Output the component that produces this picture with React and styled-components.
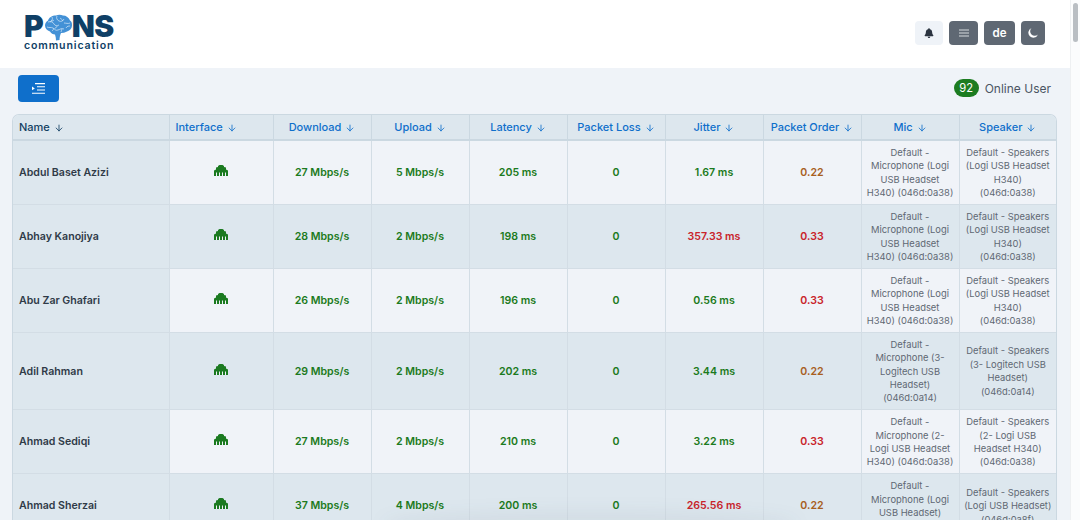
import React from "react";
import styled, { createGlobalStyle } from "styled-components";
import { ArrowDown } from "lucide-react";
import { FaBell } from "react-icons/fa";

const GlobalStyle = createGlobalStyle`
  html, body {
    margin: 0;
    padding: 0;
    height: 100%;
    overflow: hidden;
  }
  body {
    background: #fff;
    font-family: Inter, "Liberation Sans", sans-serif;
  }
`;

const COLUMNS = [156, 104, 98, 98, 98, 98, 98, 98, 98, 97];

const Page = styled.div`
  display: flex;
  height: 520px;
  overflow: hidden;
`;

const Content = styled.div`
  flex: 1;
  min-width: 0;
  display: flex;
  flex-direction: column;
`;

const ScrollTrack = styled.div`
  width: 10px;
  flex: none;
  padding: 3px 2px 0 2px;
  box-sizing: border-box;
  background: #fbfcfd;
  border-left: 1px solid #eef0f2;
`;

const ScrollThumb = styled.div`
  height: 39px;
  border-radius: 3px;
  background: #b9bec3;
`;

const TopBar = styled.header`
  height: 68px;
  flex: none;
  display: flex;
  align-items: center;
  justify-content: space-between;
  padding: 0 25px 0 24px;
  box-sizing: border-box;
  background: #fff;
`;

const Logo = styled.div`
  color: #0f3f66;
  width: 92px;
  margin-top: -2px;
`;

const LogoMark = styled.div`
  display: flex;
  align-items: center;
  height: 24px;
  font-size: 30px;
  font-weight: 900;
  line-height: 24px;
`;

const LogoTail = styled.span`
  letter-spacing: -0.4px;
`;

const LogoSub = styled.div`
  font-size: 10.6px;
  font-weight: 600;
  line-height: 12px;
  letter-spacing: 0.85px;
  margin-top: 2px;
  white-space: nowrap;
`;

const Actions = styled.div`
  display: flex;
  gap: 6px;
  margin-top: -2px;
`;

const IconButton = styled.button`
  height: 24px;
  width: ${(p) => p.$width}px;
  padding: 0;
  border: 0;
  border-radius: 4px;
  display: flex;
  align-items: center;
  justify-content: center;
  background: ${(p) => (p.$light ? "#eff3f8" : "#5f6873")};
  color: ${(p) => (p.$light ? "#2b3440" : "#fff")};
  font-family: inherit;
  font-size: 11.5px;
  font-weight: 600;
`;

const Body = styled.main`
  flex: 1;
  min-height: 0;
  background: #eff3f8;
  padding: 0 0 0 12px;
  display: flex;
  flex-direction: column;
  overflow: hidden;
`;

const SubBar = styled.div`
  height: 46px;
  flex: none;
  display: flex;
  align-items: center;
  justify-content: space-between;
  padding: 0 19px 6px 6px;
  box-sizing: border-box;
`;

const ToggleButton = styled.button`
  width: 41px;
  height: 27px;
  padding: 0;
  border: 0;
  border-radius: 4px;
  background: #0f6fcb;
  display: flex;
  align-items: center;
  justify-content: center;
`;

const OnlineCount = styled.div`
  display: flex;
  align-items: center;
  gap: 6px;
  font-size: 12px;
  color: #4b5563;
`;

const Badge = styled.span`
  width: 25px;
  height: 18px;
  border-radius: 9px;
  background: #1c7c21;
  color: #fff;
  font-size: 11.2px;
  display: flex;
  align-items: center;
  justify-content: center;
`;

const TableWrap = styled.div`
  width: 1045px;
  flex: none;
  border: 1px solid #cbd8e1;
  border-bottom: 0;
  border-radius: 7px 7px 0 0;
  box-sizing: border-box;
  overflow: hidden;
`;

const Table = styled.table`
  width: 100%;
  table-layout: fixed;
  border-collapse: collapse;
  font-size: 10.6px;
`;

const Head = styled.th`
  height: 25px;
  padding: 0 6px;
  background: #dde7ee;
  border-left: 1px solid #cbd8e1;
  border-bottom: 2px solid #cbd8e1;
  box-sizing: border-box;
  font-weight: 500;
  font-size: 11px;
  white-space: nowrap;
  text-align: ${(p) => (p.$left ? "left" : "center")};
  color: ${(p) => (p.$dark ? "#123f63" : "#0f6fcb")};
  &:first-child {
    border-left: 0;
  }
  svg {
    margin-left: 4px;
    vertical-align: -1.5px;
  }
`;

const Row = styled.tr`
  background: ${(p) => (p.$even ? "#dde7ee" : "#f0f3f8")};
`;

const NameCell = styled.td`
  background: #dde7ee;
  padding: 4.7px 6px;
  font-weight: 600;
  color: #2f3a47;
  border-bottom: 1px solid #d3dde5;
`;

const Cell = styled.td`
  padding: 4.7px 6px;
  text-align: center;
  font-weight: 600;
  color: ${(p) => p.$tone || "#1b7a20"};
  border-left: 1px solid #d3dde5;
  border-bottom: 1px solid #d3dde5;
`;

const DeviceCell = styled.td`
  padding: 4.7px ${(p) => p.$inset}px;
  text-align: center;
  font-size: 9.4px;
  line-height: 13.4px;
  color: #5f6873;
  border-left: 1px solid #d3dde5;
  border-bottom: 1px solid #d3dde5;
`;

const EthernetGlyph = styled.svg`
  display: block;
  margin: -4px auto 0;
`;

const FadeShadow = styled.div`
  position: absolute;
  left: 380px;
  bottom: -16px;
  width: 420px;
  height: 26px;
  border-radius: 50%;
  background: rgba(40, 60, 80, 0.05);
  filter: blur(8px);
  pointer-events: none;
`;

const GREEN = "#1b7a20";
const RED = "#c9242b";
const AMBER = "#a85f1f";

const HEADERS = [
  "Name",
  "Interface",
  "Download",
  "Upload",
  "Latency",
  "Packet Loss",
  "Jitter",
  "Packet Order",
  "Mic",
  "Speaker",
];

const ROWS = [
  {
    name: "Abdul Baset Azizi",
    down: "27 Mbps/s",
    up: "5 Mbps/s",
    latency: "205 ms",
    jitter: "1.67 ms",
    order: "0.22",
    mic: "Default - Microphone (Logi USB Headset H340) (046d:0a38)",
    speaker: "Default - Speakers (Logi USB Headset H340) (046d:0a38)",
  },
  {
    name: "Abhay Kanojiya",
    down: "28 Mbps/s",
    up: "2 Mbps/s",
    latency: "198 ms",
    jitter: "357.33 ms",
    jitterBad: true,
    order: "0.33",
    mic: "Default - Microphone (Logi USB Headset H340) (046d:0a38)",
    speaker: "Default - Speakers (Logi USB Headset H340) (046d:0a38)",
  },
  {
    name: "Abu Zar Ghafari",
    down: "26 Mbps/s",
    up: "2 Mbps/s",
    latency: "196 ms",
    jitter: "0.56 ms",
    order: "0.33",
    mic: "Default - Microphone (Logi USB Headset H340) (046d:0a38)",
    speaker: "Default - Speakers (Logi USB Headset H340) (046d:0a38)",
  },
  {
    name: "Adil Rahman",
    down: "29 Mbps/s",
    up: "2 Mbps/s",
    latency: "202 ms",
    jitter: "3.44 ms",
    order: "0.22",
    mic: "Default - Microphone (3- Logitech USB Headset) (046d:0a14)",
    speaker: "Default - Speakers (3- Logitech USB Headset) (046d:0a14)",
  },
  {
    name: "Ahmad Sediqi",
    down: "27 Mbps/s",
    up: "2 Mbps/s",
    latency: "210 ms",
    jitter: "3.22 ms",
    order: "0.33",
    mic: "Default - Microphone (2- Logi USB Headset H340) (046d:0a38)",
    speaker: "Default - Speakers (2- Logi USB Headset H340) (046d:0a38)",
  },
  {
    name: "Ahmad Sherzai",
    down: "37 Mbps/s",
    up: "4 Mbps/s",
    latency: "200 ms",
    jitter: "265.56 ms",
    jitterBad: true,
    order: "0.22",
    mic: "Default - Microphone (Logi USB Headset) (046d:0a8f)",
    speaker: "Default - Speakers (Logi USB Headset) (046d:0a8f)",
    speakerInset: 3,
  },
];

const BrainIcon = () => (
  <svg width="29" height="27" viewBox="0 0 29 27" style={{ margin: "3px -1px 0 0", flex: "none" }}>
    <path
      d="M12 26.500c0-2-.3-4-1-6-2 0-4-1-5-3-3-1-5-3-5-6 0-2 1-4 3-5 1-3 4-5 8-5 2-1 5-1 7 0 3 0 6 2 7 5 2 1 2 3 2 5 0 3-2 5-5 6-2 1-4 1.500-6 1.500-1 2-1.500 5-1.500 7z"
      fill="#4391d6"
    />
    <g fill="none" stroke="#d5e8f8" strokeWidth="0.7">
      <path d="M4 8c3-1 5 0 6 2s3 2 5 1M8 3c1 2 0 4-2 5M13 2c-1 2 0 4 2 5s4 0 5-2" />
      <path d="M3 13c2 1 4 0 6 1s2 3 5 2 3-2 6-1M20 9c2 0 4 1 6 0M22 14c1-2 3-2 4-2" />
      <path d="M8 17c1-1 2-2 2-3M17 18c0-1 1-2 1-3M13 12c0 1-1 2-2 2M16 4c1 1 2 1 3 3M10 6c-1 1-2 1-3 1" />
    </g>
  </svg>
);

const EthernetIcon = () => (
  <EthernetGlyph width="14" height="11" viewBox="0 0 14 11">
    <path d="M0 11V5.500L2 4.500V2.500L4 2V1L5.500 0H8.500L10 1V2L12 2.500V4.500L14 5.500V11Z" fill={GREEN} />
    <path d="M2.500 7.500V11M5.500 7.500V11M8.500 7.500V11M11.500 7.500V11" stroke="#f0f3f8" strokeWidth="1" />
  </EthernetGlyph>
);

const IndentIcon = () => (
  <svg width="13" height="11" viewBox="0 0 13 11">
    <path d="M3 .6H13M5 3.800H13M5 7H13M0 10.300H13" stroke="#fff" strokeWidth="1.100" fill="none" />
    <path d="M0 3.600L2.800 5.400L0 7.200Z" fill="#fff" />
  </svg>
);

const MenuIcon = () => (
  <svg width="10" height="8" viewBox="0 0 10 8">
    <path d="M0 1H10M0 4H10M0 7H10" stroke="#d5d9de" strokeWidth="1.200" />
  </svg>
);

const MoonIcon = () => (
  <svg width="12" height="12" viewBox="0 0 12 12">
    <path d="M4.500 1A5 5 0 1 0 11 7.500A4.500 4.500 0 0 1 4.500 1Z" fill="#fff" />
  </svg>
);

const toneFor = (value) => (value === "0.22" ? AMBER : RED);

const App = () => (
  <>
    <GlobalStyle />
    <Page>
      <Content>
        <TopBar>
          <Logo>
            <LogoMark>
              P
              <BrainIcon />
              <LogoTail>NS</LogoTail>
            </LogoMark>
            <LogoSub>communication</LogoSub>
          </Logo>
          <Actions>
            <IconButton $light $width={28}>
              <FaBell size={10} />
            </IconButton>
            <IconButton $width={29}>
              <MenuIcon />
            </IconButton>
            <IconButton $width={31}>de</IconButton>
            <IconButton $width={24}>
              <MoonIcon />
            </IconButton>
          </Actions>
        </TopBar>
        <Body>
          <SubBar>
            <ToggleButton>
              <IndentIcon />
            </ToggleButton>
            <OnlineCount>
              <Badge>92</Badge>
              Online User
            </OnlineCount>
          </SubBar>
          <TableWrap>
            <Table>
              <colgroup>
                {COLUMNS.map((w, i) => (
                  <col key={i} width={w} />
                ))}
              </colgroup>
              <thead>
                <tr>
                  {HEADERS.map((label, i) => (
                    <Head key={label} $left={i < 2} $dark={i === 0}>
                      {label}
                      <ArrowDown size={10} strokeWidth={2} />
                    </Head>
                  ))}
                </tr>
              </thead>
              <tbody>
                {ROWS.map((row, i) => (
                  <Row key={row.name} $even={i % 2 === 1}>
                    <NameCell>{row.name}</NameCell>
                    <Cell>
                      <EthernetIcon />
                    </Cell>
                    <Cell>{row.down}</Cell>
                    <Cell>{row.up}</Cell>
                    <Cell>{row.latency}</Cell>
                    <Cell>0</Cell>
                    <Cell $tone={row.jitterBad ? RED : GREEN}>{row.jitter}</Cell>
                    <Cell $tone={toneFor(row.order)}>{row.order}</Cell>
                    <DeviceCell $inset={5}>{row.mic}</DeviceCell>
                    <DeviceCell $inset={row.speakerInset || 6}>{row.speaker}</DeviceCell>
                  </Row>
                ))}
              </tbody>
            </Table>
          </TableWrap>
        </Body>
      </Content>
      <ScrollTrack>
        <ScrollThumb />
      </ScrollTrack>
      <FadeShadow />
    </Page>
  </>
);

export default App;
